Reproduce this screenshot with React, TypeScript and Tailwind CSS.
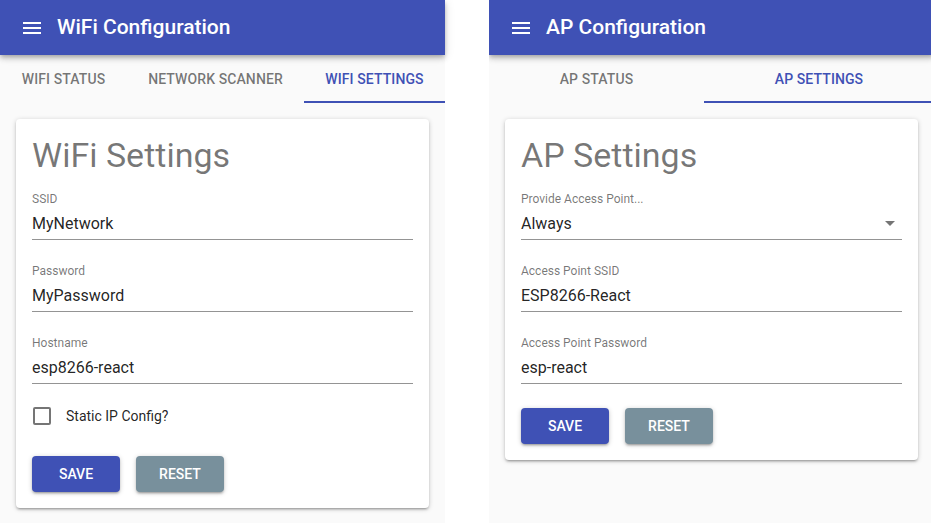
import React from 'react';

const paperShadow =
  'shadow-[0_1px_5px_0_rgba(0,0,0,0.2),0_2px_2px_0_rgba(0,0,0,0.14),0_3px_1px_-2px_rgba(0,0,0,0.12)]';

interface TabDef {
  label: string;
  width: string;
  selected?: boolean;
}

function AppBar({ title }: { title: string }) {
  return (
    <div className="relative z-10 flex h-[55px] shrink-0 items-center bg-[#3f51b5] pl-[23px] shadow-[0_2px_4px_-1px_rgba(0,0,0,0.2),0_4px_5px_0_rgba(0,0,0,0.14),0_1px_10px_0_rgba(0,0,0,0.12)]">
      {/* menu icon */}
      <svg width="18" height="12" viewBox="0 0 18 12" className="shrink-0">
        <rect x="0" y="0" width="18" height="2" fill="#fff" />
        <rect x="0" y="5" width="18" height="2" fill="#fff" />
        <rect x="0" y="10" width="18" height="2" fill="#fff" />
      </svg>
      <h1 className="ml-4 text-[21px] font-medium leading-none text-white">{title}</h1>
    </div>
  );
}

function Tabs({ tabs }: { tabs: TabDef[] }) {
  return (
    <div className="flex h-12 shrink-0">
      {tabs.map((tab) => (
        <div
          key={tab.label}
          className={`flex h-full items-center justify-center border-b-2 pt-[3px] text-[14px] font-medium uppercase tracking-[0.1px] ${tab.width} ${
            tab.selected ? 'border-[#3f51b5] text-[#3f51b5]' : 'border-transparent text-black/[0.54]'
          }`}
        >
          {tab.label}
        </div>
      ))}
    </div>
  );
}

function Field({ label, value, select }: { label: string; value: string; select?: boolean }) {
  return (
    <div className="mb-2 mt-4">
      <div className="h-4 pt-[1px] text-[12px] leading-[12px] text-black/[0.54]">{label}</div>
      <div className="flex items-center border-b border-black/[0.42] pb-[6px] pt-[6px]">
        <span className="flex-1 text-[16px] leading-[19px] text-black/[0.87]">{value}</span>
        {select && (
          <svg width="10" height="5" viewBox="0 0 10 5" className="mr-[7px]">
            <path d="M0 0 L10 0 L5 5 Z" fill="rgba(0,0,0,0.54)" />
          </svg>
        )}
      </div>
    </div>
  );
}

function Buttons() {
  return (
    <div className="mt-4 flex gap-4">
      <button className={`h-9 min-w-[88px] rounded bg-[#3f51b5] px-4 text-[14px] font-medium uppercase text-white ${paperShadow}`}>
        Save
      </button>
      <button className={`h-9 min-w-[88px] rounded bg-[#78909c] px-4 text-[14px] font-medium uppercase text-white ${paperShadow}`}>
        Reset
      </button>
    </div>
  );
}

function Card({ title, children }: { title: string; children: React.ReactNode }) {
  return (
    <div className={`mx-4 mt-4 flex flex-col rounded bg-white p-4 ${paperShadow}`}>
      <h2 className="text-[34px] font-normal leading-[41px] text-black/[0.54]">{title}</h2>
      {children}
    </div>
  );
}

export default function App() {
  return (
    <div className="flex h-[523px] w-[931px] overflow-hidden bg-white font-['Roboto',sans-serif]">
      {/* WiFi panel */}
      <div className="flex h-full w-[445px] shrink-0 flex-col bg-[#fafafa]">
        <AppBar title="WiFi Configuration" />
        <Tabs
          tabs={[
            { label: 'WiFi Status', width: 'w-[127px]' },
            { label: 'Network Scanner', width: 'w-[177px]' },
            { label: 'WiFi Settings', width: 'w-[141px]', selected: true },
          ]}
        />
        <Card title="WiFi Settings">
          <Field label="SSID" value="MyNetwork" />
          <Field label="Password" value="MyPassword" />
          <Field label="Hostname" value="esp8266-react" />
          <label className="-ml-[14px] flex h-12 items-center">
            <span className="flex h-12 w-12 items-center justify-center">
              <span className="h-[18px] w-[18px] rounded-[2px] border-2 border-black/[0.54]" />
            </span>
            <span className="text-[14px] text-black/[0.87]">Static IP Config?</span>
          </label>
          <Buttons />
        </Card>
      </div>

      <div className="w-[44px] shrink-0" />

      {/* AP panel */}
      <div className="h-full w-[442px] shrink-0 overflow-hidden">
        <div className="flex h-full w-[445px] flex-col bg-[#fafafa]">
          <AppBar title="AP Configuration" />
          <Tabs
            tabs={[
              { label: 'AP Status', width: 'w-[215px]' },
              { label: 'AP Settings', width: 'w-[230px]', selected: true },
            ]}
          />
          <Card title="AP Settings">
            <Field label="Provide Access Point..." value="Always" select />
            <Field label="Access Point SSID" value="ESP8266-React" />
            <Field label="Access Point Password" value="esp-react" />
            <Buttons />
          </Card>
        </div>
      </div>
    </div>
  );
}
